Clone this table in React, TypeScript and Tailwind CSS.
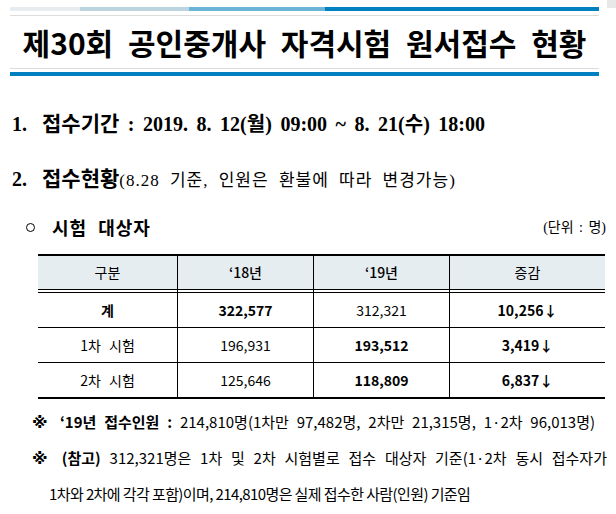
export default function App() {
  const sans = 'font-["Noto_Sans_CJK_KR",sans-serif]';
  const serif = 'font-["Liberation_Serif","Noto_Sans_CJK_KR",serif]';
  const just = 'whitespace-nowrap [text-align:justify] [text-align-last:justify]';

  const rows = [
    { label: '계', a: '322,577', aBold: true, b: '312,321', bBold: false, d: '10,256', rowBold: true },
    { label: '1차 시험', a: '196,931', aBold: false, b: '193,512', bBold: true, d: '3,419', rowBold: false },
    { label: '2차 시험', a: '125,646', aBold: false, b: '118,809', bBold: true, d: '6,837', rowBold: false },
  ];

  return (
    <div className="relative h-[514px] w-[616px] overflow-hidden bg-white text-black">
      {/* title box */}
      <div className="ml-[10px] w-[589px] pt-[7px]">
        <div className="flex h-[4px]">
          <div className="w-[70px] bg-[#e6ecf0]" />
          <div className="w-[109px] bg-[#bcd4e0]" />
          <div className="w-[136px] bg-[#6bb4d8]" />
          <div className="flex-1 bg-[#0080c0]" />
        </div>
        <div className="mt-[4px] h-px bg-[#dcdcdc]" />
        <div className={`flex h-[52px] items-center justify-center ${sans} text-[30px] font-bold leading-none [word-spacing:8px]`}>
          제30회 공인중개사 자격시험 원서접수 현황
        </div>
        <div className="h-px bg-[#dcdcdc]" />
        <div className="mt-[3px] h-[4px] bg-[#0080c0]" />
      </div>

      {/* section 1 */}
      <div className={`ml-[12px] mt-[33px] w-[473px] ${just} ${serif} text-[20px] font-bold leading-[26px]`}>
        <span className="inline-block w-[30px] text-left [text-align-last:left]">1.</span>
        <span className={`${sans} text-[21px]`}>접수기간</span>
        <span> : 2019. 8. 12(월) 09:00 ~ 8. 21(수) 18:00</span>
      </div>

      {/* section 2 */}
      <div className={`ml-[12px] mt-[27px] whitespace-nowrap ${serif} leading-[26px]`}>
        <span className="inline-block w-[30px] text-[20px] font-bold">2.</span>
        <span className={`${sans} text-[21px] font-bold`}>접수현황</span>
        <span className={`${serif} text-[17px] tracking-[1px] [word-spacing:5px]`}>(8.28 기준, 인원은 환불에 따라 변경가능)</span>
      </div>

      {/* sub heading */}
      <div className="ml-[26px] mr-[10px] mt-[21px] flex h-[24px] items-center justify-between">
        <div className="flex items-center">
          <span className="inline-block h-[9px] w-[9px] rounded-full border-[1.5px] border-black" />
          <span className={`ml-[17px] ${sans} text-[18px] font-bold tracking-[1px] [word-spacing:6px]`}>시험 대상자</span>
        </div>
        <span className={`${serif} text-[14px] [word-spacing:2px]`}>(단위 : 명)</span>
      </div>

      {/* table */}
      <div className={`ml-[38px] mt-[15px] w-[567px] ${sans} text-[14px]`}>
        <div className="grid grid-cols-[140px_136px_136px_155px] border-t-2 border-black bg-[#e6edf1]">
          <div className="flex h-[33px] items-center justify-center border-r border-black">구분</div>
          <div className="flex items-center justify-center border-r border-black font-medium">‘18년</div>
          <div className="flex items-center justify-center border-r border-black font-medium">‘19년</div>
          <div className="flex items-center justify-center">증감</div>
        </div>
        <div className="grid grid-cols-[140px_136px_136px_155px] border-t border-black">
          <div className="h-[2px] border-r border-black" />
          <div className="border-r border-black" />
          <div className="border-r border-black" />
          <div />
        </div>
        {rows.map((r) => (
          <div key={r.label} className="grid grid-cols-[140px_136px_136px_155px] border-t border-black">
            <div className={`flex h-[34px] items-center justify-center border-r border-black [word-spacing:5px] ${r.rowBold ? 'font-bold' : ''}`}>{r.label}</div>
            <div className={`flex items-center justify-center border-r border-black ${r.aBold ? 'font-bold' : ''}`}>{r.a}</div>
            <div className={`flex items-center justify-center border-r border-black ${r.bBold ? 'font-bold' : ''}`}>{r.b}</div>
            <div className="flex items-center justify-center font-bold">{r.d}↓</div>
          </div>
        ))}
        <div className="border-t-2 border-black" />
      </div>

      {/* notes */}
      <div className={`ml-[32px] mt-[5px] ${sans} text-[15px] leading-[35px]`}>
        <div className={`w-[563px] ${just}`}>
          <span className='font-["DejaVu_Sans",sans-serif] text-[16px] font-bold'>※</span>
          <span className="font-bold"> ‘19년 접수인원 : </span>
          <span>214,810명(1차만 97,482명, 2차만 21,315명, 1·2차 96,013명)</span>
        </div>
        <div className={`w-[575px] ${just}`}>
          <span className='font-["DejaVu_Sans",sans-serif] text-[16px] font-bold'>※</span>
          <span className="font-bold"> (참고) </span>
          <span>312,321명은 1차 및 2차 시험별로 접수 대상자 기준(1·2차 동시 접수자가</span>
        </div>
        <div className="ml-[17px] whitespace-nowrap tracking-[-0.6px]">1차와 2차에 각각 포함)이며, 214,810명은 실제 접수한 사람(인원) 기준임</div>
      </div>

      <div className="absolute right-0 top-0 h-[8px] w-[9px] bg-[#e8e8e8]" />
    </div>
  );
}
